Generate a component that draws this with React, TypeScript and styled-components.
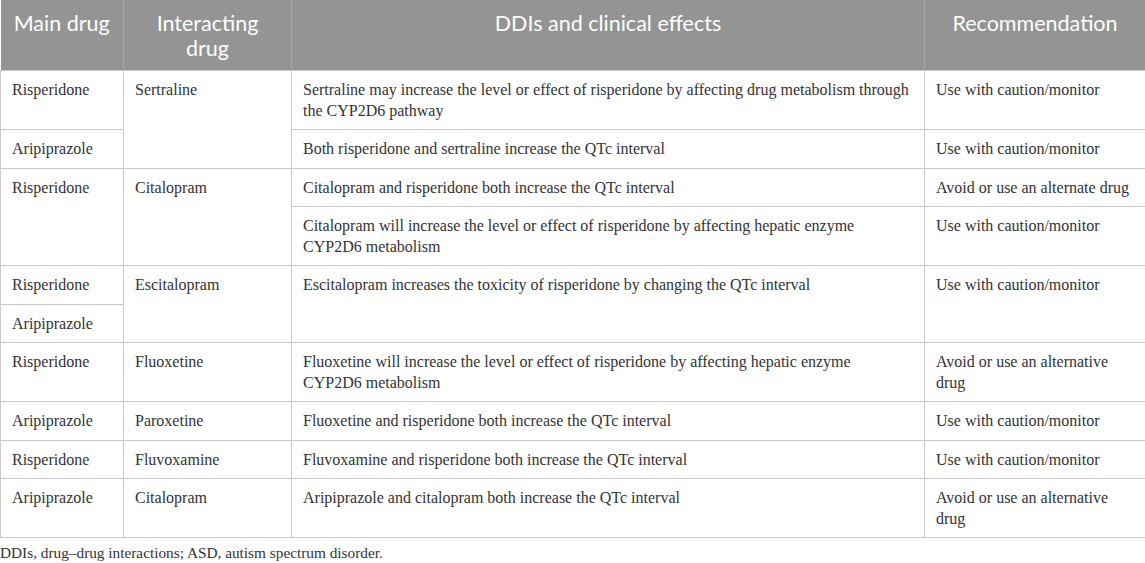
import React from "react";
import styled, { createGlobalStyle } from "styled-components";

const Global = createGlobalStyle`
  html, body { margin: 0; padding: 0; background: #ffffff; }
  body { font-family: "Liberation Serif", "Times New Roman", serif; color: #333333; }
`;

const Page = styled.div`
  width: 1145px;
`;

const Table = styled.table`
  width: 1145px;
  border-collapse: collapse;
  table-layout: fixed;
`;

const HeadCell = styled.th`
  background: #949494;
  color: #ffffff;
  font-family: Lato, "Open Sans", sans-serif;
  font-weight: 400;
  font-size: 21.5px;
  line-height: 25px;
  text-align: center;
  vertical-align: top;
  padding: 11px 10px 9px;
  border: 1px solid #a9a9a9;
  border-top: none;
  border-bottom: 1px solid #c8c8c8;
  &:first-child { border-left: none; }
`;

const Cell = styled.td`
  font-family: "Liberation Serif", "Times New Roman", serif;
  font-size: 16px;
  line-height: 20.5px;
  color: #333333;
  text-align: left;
  vertical-align: top;
  padding: 9px 11px 8px;
  border: 1px solid #c8c8c8;
`;

const Footnote = styled.p`
  margin: 5px 0 0;
  font-family: "Liberation Serif", "Times New Roman", serif;
  font-size: 15.3px;
  line-height: 20px;
  color: #333333;
`;

type Row = { cells: { text: React.ReactNode; rowSpan?: number }[] };

const rows: Row[] = [
  {
    cells: [
      { text: "Risperidone" },
      { text: "Sertraline", rowSpan: 2 },
      {
        text:
          "Sertraline may increase the level or effect of risperidone by affecting drug metabolism through the CYP2D6 pathway",
      },
      { text: "Use with caution/monitor" },
    ],
  },
  {
    cells: [
      { text: "Aripiprazole" },
      { text: "Both risperidone and sertraline increase the QTc interval" },
      { text: "Use with caution/monitor" },
    ],
  },
  {
    cells: [
      { text: "Risperidone", rowSpan: 2 },
      { text: "Citalopram", rowSpan: 2 },
      { text: "Citalopram and risperidone both increase the QTc interval" },
      { text: "Avoid or use an alternate drug" },
    ],
  },
  {
    cells: [
      {
        text: (
          <>
            Citalopram will increase the level or effect of risperidone by affecting hepatic enzyme
            <br />
            CYP2D6 metabolism
          </>
        ),
      },
      { text: "Use with caution/monitor" },
    ],
  },
  {
    cells: [
      { text: "Risperidone" },
      { text: "Escitalopram", rowSpan: 2 },
      {
        text: "Escitalopram increases the toxicity of risperidone by changing the QTc interval",
        rowSpan: 2,
      },
      { text: "Use with caution/monitor", rowSpan: 2 },
    ],
  },
  { cells: [{ text: "Aripiprazole" }] },
  {
    cells: [
      { text: "Risperidone" },
      { text: "Fluoxetine" },
      {
        text: (
          <>
            Fluoxetine will increase the level or effect of risperidone by affecting hepatic enzyme
            <br />
            CYP2D6 metabolism
          </>
        ),
      },
      {
        text: (
          <>
            Avoid or use an alternative
            <br />
            drug
          </>
        ),
      },
    ],
  },
  {
    cells: [
      { text: "Aripiprazole" },
      { text: "Paroxetine" },
      { text: "Fluoxetine and risperidone both increase the QTc interval" },
      { text: "Use with caution/monitor" },
    ],
  },
  {
    cells: [
      { text: "Risperidone" },
      { text: "Fluvoxamine" },
      { text: "Fluvoxamine and risperidone both increase the QTc interval" },
      { text: "Use with caution/monitor" },
    ],
  },
  {
    cells: [
      { text: "Aripiprazole" },
      { text: "Citalopram" },
      { text: "Aripiprazole and citalopram both increase the QTc interval" },
      {
        text: (
          <>
            Avoid or use an alternative
            <br />
            drug
          </>
        ),
      },
    ],
  },
];

export default function App() {
  return (
    <Page>
      <Global />
      <Table>
        <colgroup>
          <col style={{ width: 123 }} />
          <col style={{ width: 168 }} />
          <col style={{ width: 633 }} />
          <col style={{ width: 221 }} />
        </colgroup>
        <thead>
          <tr>
            <HeadCell>Main drug</HeadCell>
            <HeadCell>
              Interacting
              <br />
              drug
            </HeadCell>
            <HeadCell>DDIs and clinical effects</HeadCell>
            <HeadCell>Recommendation</HeadCell>
          </tr>
        </thead>
        <tbody>
          {rows.map((r, i) => (
            <tr key={i}>
              {r.cells.map((c, j) => (
                <Cell key={j} rowSpan={c.rowSpan}>
                  {c.text}
                </Cell>
              ))}
            </tr>
          ))}
        </tbody>
      </Table>
      <Footnote>DDIs, drug–drug interactions; ASD, autism spectrum disorder.</Footnote>
    </Page>
  );
}
